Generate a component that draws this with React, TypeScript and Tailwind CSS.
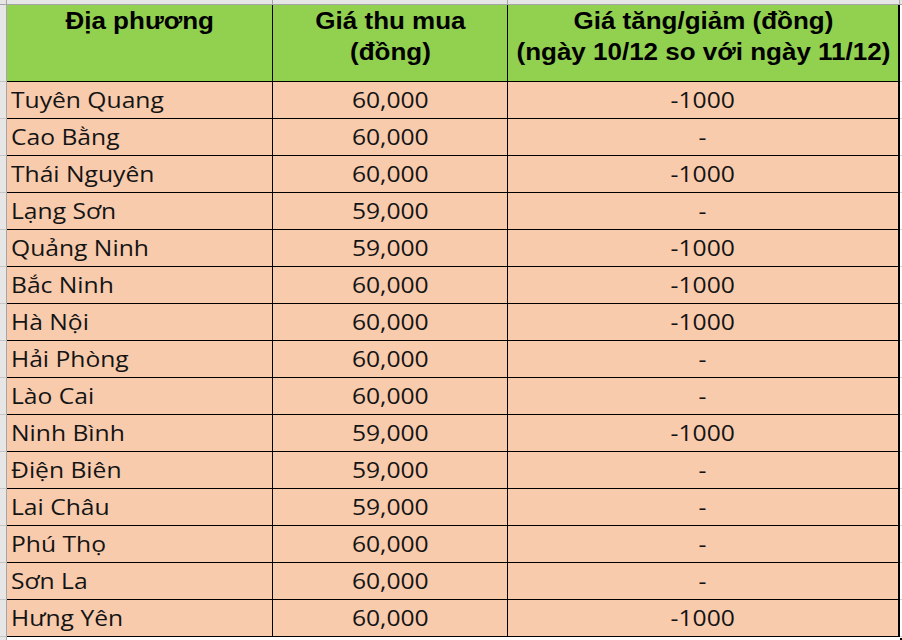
import React from 'react';

type Row = [string, string, string];

const rows: Row[] = [
    ['Tuyên Quang', '60,000', '-1000'],
    ['Cao Bằng', '60,000', '-'],
    ['Thái Nguyên', '60,000', '-1000'],
    ['Lạng Sơn', '59,000', '-'],
    ['Quảng Ninh', '59,000', '-1000'],
    ['Bắc Ninh', '60,000', '-1000'],
    ['Hà Nội', '60,000', '-1000'],
    ['Hải Phòng', '60,000', '-'],
    ['Lào Cai', '60,000', '-'],
    ['Ninh Bình', '59,000', '-1000'],
    ['Điện Biên', '59,000', '-'],
    ['Lai Châu', '59,000', '-'],
    ['Phú Thọ', '60,000', '-'],
    ['Sơn La', '60,000', '-'],
    ['Hưng Yên', '60,000', '-1000'],
];

// spreadsheet row-header strip on the left
function Strip({ h }: { h: string }) {
    return <div className={`w-[7px] shrink-0 bg-[#e6e6e6] border-r border-b border-r-[#a6a6a6] border-b-[#c6c6c6] ${h}`} />;
}

function HeadCell({ w, children }: { w: string; children: React.ReactNode }) {
    return (
        <div className={`${w} shrink-0 bg-[#92d050] border-b border-black text-center pt-[1px] text-[23px] leading-[31px] font-bold text-black whitespace-nowrap font-['Liberation_Sans',Arial,sans-serif]`}>
            <span className="inline-block scale-x-[1.13]">{children}</span>
        </div>
    );
}

export default function App() {
    return (
        <div className="w-[902px] h-[640px] overflow-hidden bg-white flex flex-col">
            {/* column letters band */}
            <div className="flex h-[5px] shrink-0">
                <div className="w-[7px] bg-[#e6e6e6] border-r border-b border-[#a6a6a6]" />
                <div className="w-[266px] bg-[#e6e6e6] border-r border-b border-[#a6a6a6]" />
                <div className="w-[235px] bg-[#e6e6e6] border-r border-b border-[#a6a6a6]" />
                <div className="w-[392px] bg-[#e6e6e6] border-r border-b border-[#a6a6a6]" />
                <div className="flex-1 bg-[#e6e6e6] border-b border-[#a6a6a6]" />
            </div>

            {/* header */}
            <div className="flex h-[77px] shrink-0">
                <Strip h="h-[77px]" />
                <HeadCell w="w-[266px] border-r">Địa phương</HeadCell>
                <HeadCell w="w-[235px] border-r">
                    Giá thu mua
                    <br />
                    (đồng)
                </HeadCell>
                <HeadCell w="w-[392px] border-r-2">
                    Giá tăng/giảm (đồng)
                    <br />
                    (ngày 10/12 so với ngày 11/12)
                </HeadCell>
                <div className="flex-1 border-b border-[#d4d4d4]" />
            </div>

            {/* body */}
            {rows.map(([place, price, diff], i) => (
                <div key={i} className="flex h-[37px] shrink-0 text-[22px] leading-[35px] text-[#141414] font-['Open_Sans',sans-serif] whitespace-nowrap">
                    <Strip h="h-[37px]" />
                    <div className="w-[266px] shrink-0 bg-[#f8cbad] border-r border-b border-black pl-[4px]">
                        <span className="inline-block origin-left scale-x-[1.12]">{place}</span>
                    </div>
                    <div className="w-[235px] shrink-0 bg-[#f8cbad] border-r border-b border-black text-center">
                        <span className="inline-block scale-x-[1.12]">{price}</span>
                    </div>
                    <div className="w-[392px] shrink-0 bg-[#f8cbad] border-r-2 border-b border-black text-center">
                        <span className="inline-block scale-x-[1.12]">{diff}</span>
                    </div>
                    <div className="flex-1 border-b border-[#d4d4d4]" />
                </div>
            ))}

            {/* rest of the sheet */}
            <div className="flex flex-1">
                <div className="w-[7px] shrink-0 bg-[#e6e6e6] border-r border-[#a6a6a6]" />
                <div className="w-[893px] shrink-0" />
                <div className="flex-1 pt-[1px]">
                    <div className="w-[2px] h-[3px] bg-black" />
                </div>
            </div>
        </div>
    );
}
